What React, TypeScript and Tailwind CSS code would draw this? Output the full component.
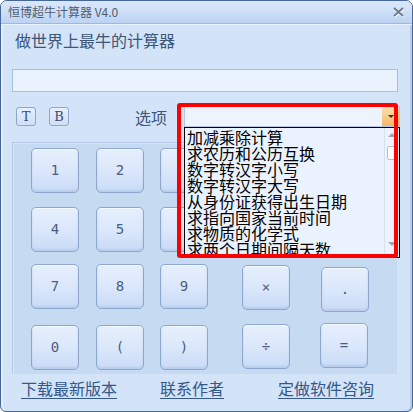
import React from "react";

const cjk = { fontFamily: '"Noto Sans CJK SC", "Noto Sans", sans-serif' };
const mono = { fontFamily: '"DejaVu Sans Mono", "Liberation Mono", monospace' };

function Key({ label, ml, mt = 0 }: { label: string; ml: number; mt?: number }) {
  return (
    <div
      className="w-[48px] h-[45px] shrink-0 rounded-[5px] border border-[#8ea7cf] bg-gradient-to-b from-[#e6effd] via-[#dbe7fb] to-[#c9dbf6] shadow-[inset_0_1px_0_#f4f8ff,inset_0_-2px_2px_#b9cdee] flex items-center justify-center text-[14px] text-[#4a5e80]"
      style={{ marginLeft: ml, marginTop: mt, ...mono }}
    >
      {label}
    </div>
  );
}

export default function App() {
  const items = [
    "加减乘除计算",
    "求农历和公历互换",
    "数字转汉字小写",
    "数字转汉字大写",
    "从身份证获得出生日期",
    "求指向国家当前时间",
    "求物质的化学式",
    "求两个日期间隔天数",
  ];
  return (
    <div className="w-[413px] h-[412px] bg-white relative" style={cjk}>
      <div className="w-full h-full flex flex-col border border-[#45679a] rounded-t-[7px] rounded-b-[6px] bg-[#d3e3f8] overflow-hidden shadow-[inset_-2px_0_0_#b8cbe6,inset_2px_0_0_#e4eefb]">
        {/* title bar */}
        <div className="h-[23px] shrink-0 flex items-center justify-between pl-[7px] pr-[6px] bg-gradient-to-b from-[#dbe8fa] via-[#cddff7] to-[#bcd3f2] border-b border-[#9fb8dc] shadow-[0_1px_0_#e9f1fc]">
          <span className="text-[12px] text-[#4f5d72] leading-none">恒博超牛计算器 V4.0</span>
          <svg width="14" height="12" viewBox="0 0 14 12">
            <path d="M2 2 L11 10 M11 2 L2 10" stroke="#ffffff" strokeWidth="2" transform="translate(0.5,1)" />
            <path d="M2 2 L11 10 M11 2 L2 10" stroke="#6d7b8e" strokeWidth="1.8" />
          </svg>
        </div>
        {/* content */}
        <div className="flex flex-col pl-[11px]">
          <div className="mt-[5px] ml-[3px] h-[22px] leading-[22px] text-[16px] text-[#3d5576]">做世界上最牛的计算器</div>
          <div className="mt-[18px] w-[386px] h-[23px] bg-[#eaf2fd] border border-[#a8bfe0]" />
          <div className="mt-[14px] flex items-start h-[21px]">
            <div className="ml-[4px] mt-[1px] w-[20px] h-[19px] rounded-[3px] border border-[#8ea7cf] bg-gradient-to-b from-[#e6effd] to-[#cfdff7] flex items-center justify-center text-[13px] text-[#3a4f72]" style={{ fontFamily: '"DejaVu Serif", serif' }}>T</div>
            <div className="ml-[13px] mt-[1px] w-[20px] h-[19px] rounded-[3px] border border-[#8ea7cf] bg-gradient-to-b from-[#e6effd] to-[#cfdff7] flex items-center justify-center text-[13px] text-[#3a4f72]" style={{ fontFamily: '"DejaVu Serif", serif' }}>B</div>
            <div className="ml-[66px] mt-[2px] text-[16px] leading-[18px] text-[#3d5576]">选项</div>
            <div className="ml-[17px] w-[216px] h-[21px] bg-[#eef4fd] border border-[#b6c9e6] flex justify-end">
              <div className="w-[17px] h-full bg-gradient-to-b from-[#fde3b0] to-[#f6b563] flex items-center justify-center">
                <div className="w-0 h-0 border-l-[3px] border-r-[3px] border-t-[3px] border-l-transparent border-r-transparent border-t-[#333]" />
              </div>
            </div>
          </div>
          {/* keypad panel */}
          <div className="mt-[15px] w-[385px] h-[232px] bg-[#c6daf2] border-l border-t border-[#b2c8e6] shadow-[inset_1px_1px_0_#dbe7f8] flex flex-col pt-[5px]">
            <div className="flex">
              <Key label="1" ml={18} />
              <Key label="2" ml={17} />
              <Key label="" ml={16} />
              <Key label="" ml={35} />
              <Key label="" ml={31} />
            </div>
            <div className="flex mt-[14px]">
              <Key label="4" ml={18} />
              <Key label="5" ml={17} />
              <Key label="" ml={16} />
              <Key label="" ml={35} />
              <Key label="" ml={31} />
            </div>
            <div className="flex mt-[12px]">
              <Key label="7" ml={18} />
              <Key label="8" ml={17} />
              <Key label="9" ml={16} />
              <Key label="×" ml={34} mt={1} />
              <Key label="." ml={31} mt={3} />
            </div>
            <div className="flex mt-[11px] items-start">
              <Key label="0" ml={18} mt={2} />
              <Key label="(" ml={17} mt={2} />
              <Key label=")" ml={16} mt={2} />
              <Key label="÷" ml={34} mt={1} />
              <Key label="=" ml={30} />
            </div>
          </div>
          <div className="mt-[5px] flex text-[16px] leading-[18px] text-[#34588c]">
            <span className="ml-[9px] underline underline-offset-[3px]">下载最新版本</span>
            <span className="ml-[43px] underline underline-offset-[3px]">联系作者</span>
            <span className="ml-[54px] underline underline-offset-[3px]">定做软件咨询</span>
          </div>
        </div>
      </div>

      {/* dropdown list */}
      <div className="absolute left-[184px] top-[127px] w-[216px] h-[131px] border border-black bg-[#eaf2fd] flex overflow-hidden">
        <div className="flex-1 flex flex-col pl-[2px] pt-[1px]">
          {items.map((t) => (
            <div key={t} className="text-[16px] leading-[16px] h-[16px] text-black whitespace-nowrap">{t}</div>
          ))}
        </div>
        <div className="w-[15px] h-full bg-[#edf3fc] border-l border-[#d5e0ef] flex flex-col items-center">
          <div className="mt-[5px] w-0 h-0 border-l-[4px] border-r-[4px] border-b-[4px] border-l-transparent border-r-transparent border-b-[#9aa4b0]" />
          <div className="mt-[9px] w-[11px] h-[14px] bg-white border border-[#b5c0cf] rounded-[2px]" />
          <div className="flex-1" />
          <div className="mb-[11px] w-0 h-0 border-l-[4px] border-r-[4px] border-t-[4px] border-l-transparent border-r-transparent border-t-[#9aa4b0]" />
        </div>
      </div>

      {/* red highlight */}
      <div className="absolute left-[177px] top-[103px] w-[221px] h-[155px] border-[4px] border-[#ff0000] rounded-[3px]" />
    </div>
  );
}
